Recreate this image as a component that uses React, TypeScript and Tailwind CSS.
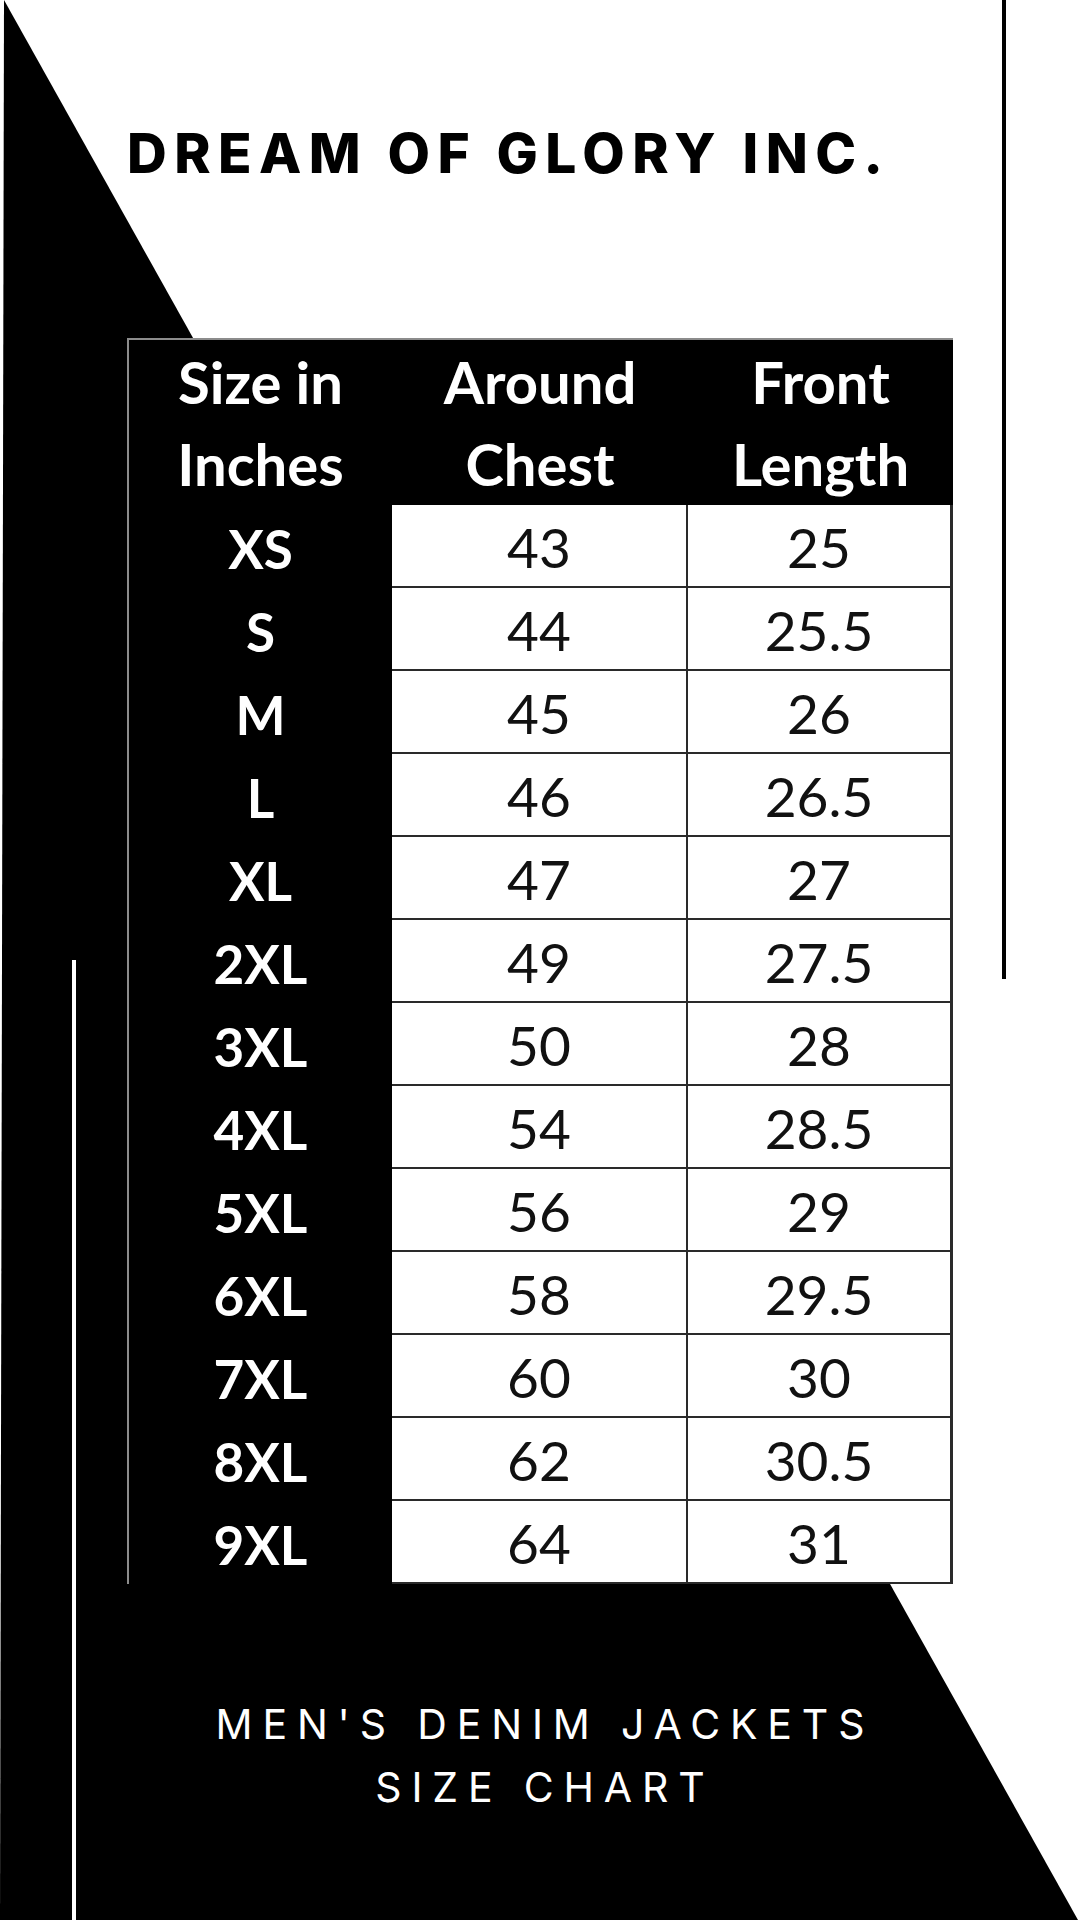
const rows: [string, string, string][] = [
  ["XS", "43", "25"],
  ["S", "44", "25.5"],
  ["M", "45", "26"],
  ["L", "46", "26.5"],
  ["XL", "47", "27"],
  ["2XL", "49", "27.5"],
  ["3XL", "50", "28"],
  ["4XL", "54", "28.5"],
  ["5XL", "56", "29"],
  ["6XL", "58", "29.5"],
  ["7XL", "60", "30"],
  ["8XL", "62", "30.5"],
  ["9XL", "64", "31"],
];

function SizeTable() {
  return (
    <div className="w-[826px] border-l-2 border-t-2 border-[#8c8c8c] bg-black font-['Lato',sans-serif]">
      {/* header */}
      <div className="flex h-[165px] items-center text-[58px] font-bold leading-[82px] text-white">
        <div className="w-[263px] text-center">
          Size in
          <br />
          Inches
        </div>
        <div className="w-[296px] text-center">
          Around
          <br />
          Chest
        </div>
        <div className="w-[265px] text-center">
          Front
          <br />
          Length
        </div>
      </div>

      {rows.map(([size, chest, length]) => (
        <div key={size} className="flex h-[83px] text-[55px] leading-none">
          <div className="flex w-[263px] items-center justify-center pt-[4px] text-[53px] font-bold text-white">
            {size}
          </div>
          <div className="flex w-[296px] items-center justify-center border-b-2 border-r-2 border-[#2a2a2a] bg-white pt-[4px] text-[#111]">
            {chest}
          </div>
          <div className="flex w-[265px] items-center justify-center border-b-2 border-r-[3px] border-[#2a2a2a] bg-white pt-[4px] text-[#111]">
            {length}
          </div>
        </div>
      ))}
    </div>
  );
}

export default function App() {
  return (
    <div className="relative h-[1920px] w-[1080px] overflow-hidden bg-white">
      {/* diagonal black backdrop */}
      <svg
        className="absolute inset-0"
        width="1080"
        height="1920"
        viewBox="0 0 1080 1920"
      >
        <polygon points="4,0 1078,1920 0,1920" fill="#000" />
      </svg>
      <div className="absolute left-[1002px] top-0 h-[979px] w-[4px] bg-black" />
      <div className="absolute left-[72px] top-[960px] h-[960px] w-[4px] bg-white" />

      <div className="relative flex flex-col">
        <h1 className="ml-[127px] mt-[126px] font-['Inter',sans-serif] text-[55px] font-extrabold leading-none tracking-[0.135em] text-black">
          DREAM OF GLORY INC.
        </h1>

        <div className="ml-[127px] mt-[157px]">
          <SizeTable />
        </div>

        <div className="mt-[109px] pl-[0.24em] text-center font-['Inter',sans-serif] text-[41px] font-normal leading-[63px] tracking-[0.24em] text-white">
          MEN'S DENIM JACKETS
          <br />
          SIZE CHART
        </div>
      </div>
    </div>
  );
}
